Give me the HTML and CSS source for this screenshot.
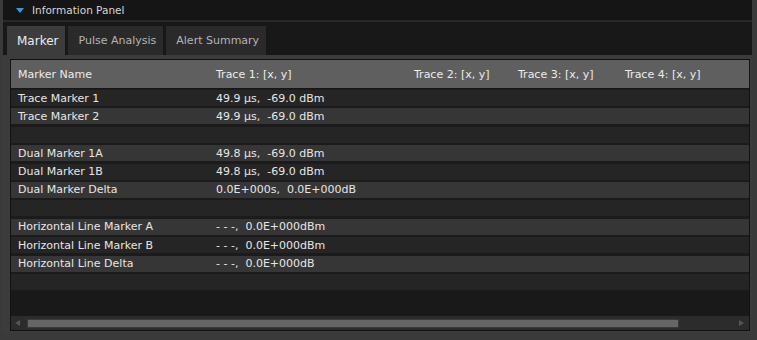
FILE: index.html
```html
<!DOCTYPE html>
<html>
<head>
  <title>Information Panel</title>
  <link rel="stylesheet" href="styles.css">
</head>
<body>
  <div class="frame">
    <div class="title-bar">
      <span class="caret"></span>
      <span class="title-text">Information Panel</span>
    </div>

    <div class="tab-strip">
      <div class="tab active">Marker</div>
      <div class="tab">Pulse Analysis</div>
      <div class="tab">Alert Summary</div>
    </div>

    <div class="content">
      <div class="table">
        <div class="row head">
          <div class="cell">Marker Name</div>
          <div class="cell">Trace 1: [x, y]</div>
          <div class="cell">Trace 2: [x, y]</div>
          <div class="cell">Trace 3: [x, y]</div>
          <div class="cell">Trace 4: [x, y]</div>
        </div>

        <div class="rows">
          <div class="row dark"><div class="cell">Trace Marker 1</div><div class="cell">49.9 µs,  -69.0 dBm</div><div class="cell"></div><div class="cell"></div><div class="cell"></div></div>
          <div class="row light"><div class="cell">Trace Marker 2</div><div class="cell">49.9 µs,  -69.0 dBm</div><div class="cell"></div><div class="cell"></div><div class="cell"></div></div>
          <div class="row dark"></div>
          <div class="row light"><div class="cell">Dual Marker 1A</div><div class="cell">49.8 µs,  -69.0 dBm</div><div class="cell"></div><div class="cell"></div><div class="cell"></div></div>
          <div class="row dark"><div class="cell">Dual Marker 1B</div><div class="cell">49.8 µs,  -69.0 dBm</div><div class="cell"></div><div class="cell"></div><div class="cell"></div></div>
          <div class="row light"><div class="cell">Dual Marker Delta</div><div class="cell">0.0E+000s,  0.0E+000dB</div><div class="cell"></div><div class="cell"></div><div class="cell"></div></div>
          <div class="row dark"></div>
          <div class="row light"><div class="cell">Horizontal Line Marker A</div><div class="cell">- - -,  0.0E+000dBm</div><div class="cell"></div><div class="cell"></div><div class="cell"></div></div>
          <div class="row dark"><div class="cell">Horizontal Line Marker B</div><div class="cell">- - -,  0.0E+000dBm</div><div class="cell"></div><div class="cell"></div><div class="cell"></div></div>
          <div class="row light"><div class="cell">Horizontal Line Delta</div><div class="cell">- - -,  0.0E+000dB</div><div class="cell"></div><div class="cell"></div><div class="cell"></div></div>
          <div class="row dark"></div>
        </div>

        <div class="filler"></div>

        <!-- horizontal scrollbar -->
        <div class="hscroll">
          <span class="arrow-left"></span>
          <span class="thumb"></span>
          <span class="arrow-right"></span>
        </div>
      </div>
    </div>
  </div>
</body>
</html>
```

FILE: styles.css
```css
body {
  margin: 0;
  background-color: #3a3a3a;
  font-family: "DejaVu Sans", Verdana, sans-serif;
}

.frame {
  width: 757px;
  height: 340px;
  box-sizing: border-box;
  padding: 0 5px 7px 3px;
  background-color: #3a3a3a;
  display: flex;
  flex-direction: column;
}

.title-bar {
  height: 21px;
  box-sizing: border-box;
  background-color: #151515;
  border-bottom: 1px solid #262626;
  display: flex;
  align-items: center;
  padding-left: 13px;
}

.caret {
  width: 0;
  height: 0;
  border-left: 4px solid transparent;
  border-right: 4px solid transparent;
  border-top: 5px solid #2e9be0;
  margin-right: 8px;
  margin-top: 1px;
}

.title-text {
  font-size: 10.5px;
  color: #d6d6d6;
}

.tab-strip {
  height: 34px;
  box-sizing: border-box;
  background-color: #181818;
  border-top: 1px solid #2a2a2a;
  padding: 4px 0 0 4px;
  display: flex;
  gap: 3px;
}

.tab {
  padding: 0 7px 0 10px;
  display: flex;
  align-items: center;
  font-size: 11px;
  color: #b4b4b4;
  background-color: #2a2a2a;
}

.tab.active {
  background-color: #3c3c3c;
  color: #ececec;
  font-size: 12px;
}

.content {
  flex: 1;
  background-color: #3c3c3c;
  padding: 4px 2px 2px 7px;
  display: flex;
}

.table {
  flex: 1;
  border: 1px solid #121212;
  background-color: #191919;
  display: flex;
  flex-direction: column;
}

.row {
  display: grid;
  grid-template-columns: 198px 198px 104px 107px 1fr;
  height: 16px;
  margin-bottom: 2.4px;
  align-items: center;
  font-size: 11px;
  color: #e6e6e6;
}

.row.head {
  height: 28px;
  margin-bottom: 0;
  background-color: #5f5f5f;
  border-bottom: 1px solid #161616;
  color: #ececec;
}

.cell {
  padding-left: 7px;
  white-space: pre;
}

.rows {
  background-color: #1b1b1b;
  padding-top: 1px;
}

.row.dark {
  background-color: #252525;
}

.row.light {
  background-color: #363636;
}

.filler {
  flex: 1;
  background-color: #191919;
}

.hscroll {
  height: 14px;
  background-color: #2c2c2c;
  display: flex;
  align-items: center;
  padding: 0 5px 0 4px;
}

.arrow-left {
  width: 0;
  height: 0;
  border-top: 3px solid transparent;
  border-bottom: 3px solid transparent;
  border-right: 5px solid #555;
}

.thumb {
  width: 650px;
  height: 7px;
  margin-left: 7px;
  background-color: #666;
  border: 1px solid #3a3a3a;
}

.arrow-right {
  width: 0;
  height: 0;
  margin-left: auto;
  border-top: 3px solid transparent;
  border-bottom: 3px solid transparent;
  border-left: 5px solid #555;
}
```
